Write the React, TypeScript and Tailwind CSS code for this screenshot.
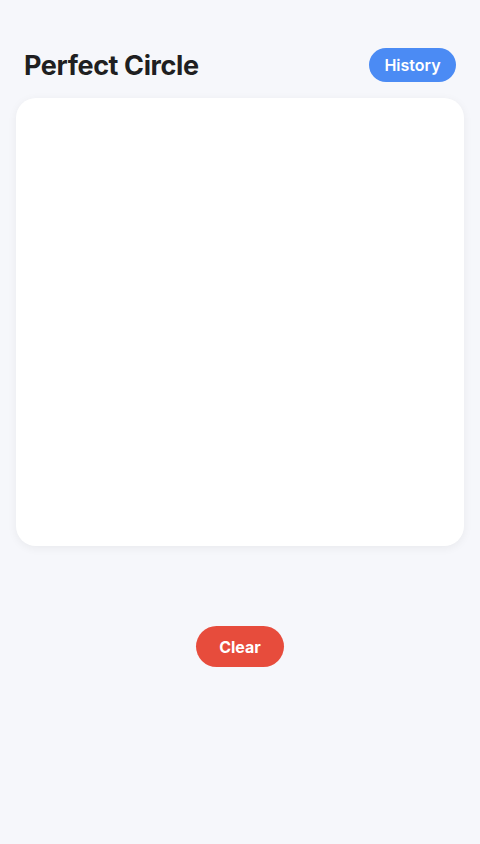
export default function App() {
  return (
    <div className="min-h-screen bg-[#f6f7fb] px-4 pt-12 font-['Inter',sans-serif]">
      {/* Header */}
      <div className="flex items-center justify-between px-2 h-[34px]">
        <h1 className="text-[27px] font-bold text-[#1f1f21] tracking-[-0.4px] mt-[2px]">Perfect Circle</h1>
        <button className="h-[34px] w-[87px] rounded-full bg-[#4b8bf4] text-white text-[16px] font-semibold">
          History
        </button>
      </div>

      {/* Canvas */}
      <div className="mt-4 h-[448px] rounded-[20px] bg-white shadow-[0_2px_10px_rgba(0,0,0,0.06)]"></div>

      {/* Clear */}
      <div className="flex justify-center mt-20">
        <button className="h-[41px] w-[88px] rounded-full bg-[#e74c3c] text-white text-[16px] font-bold">
          Clear
        </button>
      </div>
    </div>
  );
}
